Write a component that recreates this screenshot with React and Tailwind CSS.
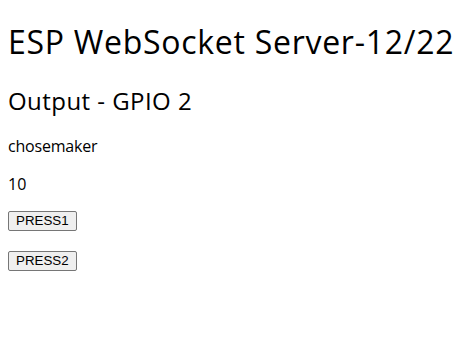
export default function App() {
  return (
    <div className="px-2 pt-px text-black bg-white min-h-[337px] font-['Open_Sans','Noto_Sans',sans-serif]">
      <h1 className="text-[32px] font-normal tracking-[0.72px] leading-[1.33] mt-[20px] mb-[21px]">ESP WebSocket Server-12/22</h1>
      <h2 className="text-[24px] font-normal tracking-[0.45px] leading-[1.33] mt-[20px] mb-[20px]">Output - GPIO 2</h2>
      <p className="text-[16px] tracking-[-0.2px] leading-[1.33] my-4">chosemaker</p>
      <p className="text-[16px] leading-[1.33] my-4">10</p>
      <div className="flex flex-col items-start gap-[20px] mt-px">
        <button className="px-[7px] py-px border border-[#767676] rounded-[2px] bg-[#efefef] text-[13.33px] leading-[16px] font-['Liberation_Sans',Arial,sans-serif]">PRESS1</button>
        <button className="px-[7px] py-px border border-[#767676] rounded-[2px] bg-[#efefef] text-[13.33px] leading-[16px] font-['Liberation_Sans',Arial,sans-serif]">PRESS2</button>
      </div>
    </div>
  );
}
